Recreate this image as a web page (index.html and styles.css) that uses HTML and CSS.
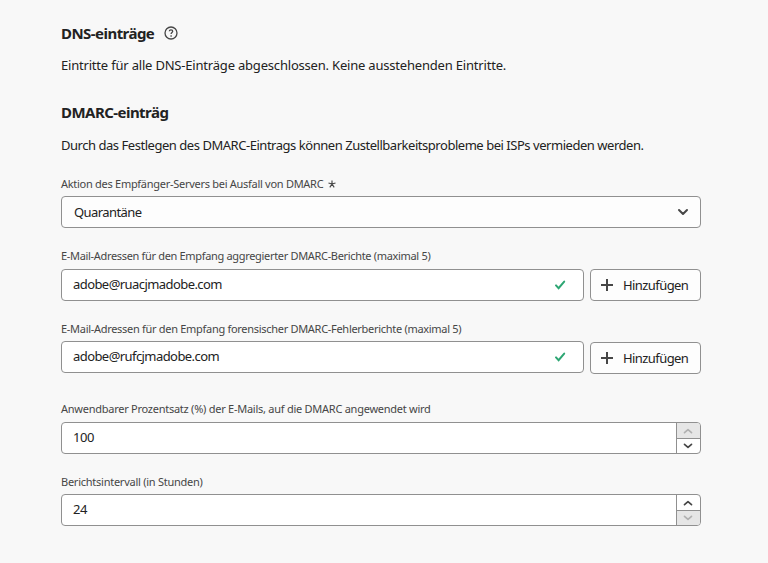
FILE: index.html
```html
<!DOCTYPE html>
<html lang="de">
<head>
<meta charset="utf-8">
<title>DNS-einträge</title>
<link rel="stylesheet" href="styles.css">
</head>
<body>
<main class="form">
  <h2 class="heading heading-dns"><span>DNS-einträge</span>
    <svg class="help" viewBox="0 0 14 14"><circle cx="7" cy="7" r="6"/><path d="M5.3 5.3C5.4 4.3 6 3.9 7 3.9c1 0 1.7.5 1.7 1.4 0 1.2-1.6 1.3-1.6 2.8M7.1 9.3v1.5"/></svg>
  </h2>
  <p class="text text-status">Eintritte für alle DNS-Einträge abgeschlossen. Keine ausstehenden Eintritte.</p>
  <h2 class="heading heading-dmarc">DMARC-einträg</h2>
  <p class="text text-info">Durch das Festlegen des DMARC-Eintrags können Zustellbarkeitsprobleme bei ISPs vermieden werden.</p>

  <section class="field field-action">
    <div class="label label-action"><span>Aktion des Empfänger-Servers bei Ausfall von DMARC</span>
      <svg class="star" viewBox="0 0 8 8"><path d="M4 .4V4M4 4 .5 3M4 4l3.5-1M4 4 1.8 7.4M4 4l2.2 3.4"/></svg>
    </div>
    <div class="box select"><span>Quarantäne</span>
      <svg class="chevron" viewBox="0 0 12 8"><path d="m2 2 4 4 4-4"/></svg>
    </div>
  </section>

  <section class="field field-rua">
    <div class="label label-rua">E-Mail-Adressen für den Empfang aggregierter DMARC-Berichte (maximal 5)</div>
    <div class="row">
      <div class="box email"><span>adobe@ruacjmadobe.com</span>
        <svg class="check" viewBox="0 0 12 10"><path d="m2 5.4 2.6 2.8 5.6-6.6"/></svg>
      </div>
      <div class="box button"><svg class="plus" viewBox="0 0 12 12"><path d="M6 0v12M0 6h12"/></svg><span>Hinzufügen</span></div>
    </div>
  </section>

  <section class="field field-ruf">
    <div class="label label-ruf">E-Mail-Adressen für den Empfang forensischer DMARC-Fehlerberichte (maximal 5)</div>
    <div class="row">
      <div class="box email"><span>adobe@rufcjmadobe.com</span>
        <svg class="check" viewBox="0 0 12 10"><path d="m2 5.4 2.6 2.8 5.6-6.6"/></svg>
      </div>
      <div class="box button button-low"><svg class="plus" viewBox="0 0 12 12"><path d="M6 0v12M0 6h12"/></svg><span>Hinzufügen</span></div>
    </div>
  </section>

  <section class="field field-percent">
    <div class="label label-percent">Anwendbarer Prozentsatz (%) der E-Mails, auf die DMARC angewendet wird</div>
    <div class="box number"><span>100</span>
      <div class="stepper">
        <div class="step disabled"><svg viewBox="0 0 10 6"><path d="m1.5 4.7 3.5-3 3.5 3"/></svg></div>
        <div class="step"><svg viewBox="0 0 10 6"><path d="m1.5 1.3 3.5 3 3.5-3"/></svg></div>
      </div>
    </div>
  </section>

  <section class="field field-interval">
    <div class="label label-interval">Berichtsintervall (in Stunden)</div>
    <div class="box number"><span>24</span>
      <div class="stepper">
        <div class="step"><svg viewBox="0 0 10 6"><path d="m1.5 4.7 3.5-3 3.5 3"/></svg></div>
        <div class="step disabled"><svg viewBox="0 0 10 6"><path d="m1.5 1.3 3.5 3 3.5-3"/></svg></div>
      </div>
    </div>
  </section>
</main>
</body>
</html>
```
FILE: styles.css
```css
* { box-sizing: border-box; }
body { margin: 0; background: #f8f8f8; color: #222; font: 13px/20px "Noto Sans", "Open Sans", sans-serif; }
.form { width: 640px; margin-left: 61px; padding-top: 23px; white-space: nowrap; }
svg { display: block; flex: none; fill: none; stroke: #464646; }
.heading { display: flex; align-items: center; margin: 0; height: 20px; font-size: 15px; line-height: 20px; font-weight: 700; letter-spacing: -0.54px; }
.heading-dmarc { margin-top: 27px; }
.help { width: 14px; height: 14px; margin-left: 10px; stroke-width: 1.3; }
.text { margin: 0; height: 20px; }
.text-status { margin-top: 12px; letter-spacing: -0.195px; }
.text-info { margin-top: 13px; letter-spacing: -0.465px; }
.label { display: flex; align-items: center; height: 16px; color: #464646; font-size: 11px; line-height: 16px; }
.label-action { letter-spacing: -0.28px; }
.label-rua { letter-spacing: -0.325px; }
.label-ruf { letter-spacing: -0.295px; }
.label-percent { letter-spacing: -0.255px; }
.label-interval { letter-spacing: -0.25px; }
.star { width: 8px; height: 8px; margin-left: 5px; stroke-width: 1.15; }
.field-action { margin-top: 21px; }
.field-rua { margin-top: 20px; }
.field-ruf { margin-top: 20px; }
.field-percent { margin-top: 28px; }
.field-interval { margin-top: 20px; }
.box { display: flex; align-items: center; height: 32px; border: 1px solid #909090; border-radius: 4px; background: #fff; letter-spacing: -0.57px; }
.select { margin-top: 4px; padding: 0 11px 0 12px; justify-content: space-between; background: #fdfdfd; }
.chevron { width: 12px; height: 8px; stroke-width: 2; stroke-linecap: round; stroke-linejoin: round; }
.row { display: flex; align-items: flex-start; gap: 6px; height: 32px; margin-top: 5px; }
.field-ruf .row { margin-top: 4px; }
.email { flex: 1; padding: 0 17px 1px 11px; justify-content: space-between; }
.email > span { padding-bottom: 1px; }
.check { width: 12px; height: 10px; stroke: #2da673; stroke-width: 2; stroke-linecap: round; }
.button { width: 111px; padding-left: 10px; background: #fdfdfd; }
.button-low { margin-top: 1px; }
.plus { width: 12px; height: 12px; margin-right: 10px; stroke-width: 2; }
.number { margin-top: 5px; padding: 0 0 0 11px; justify-content: space-between; overflow: hidden; letter-spacing: -0.4px; }
.number > span { padding-bottom: 2px; }
.field-interval .number { margin-top: 4px; }
.stepper { display: flex; flex-direction: column; width: 24px; height: 30px; border-left: 1px solid #909090; }
.step { display: flex; flex: none; height: 15px; align-items: center; justify-content: center; padding-right: 1px; }
.step + .step { border-top: 1px solid #909090; padding-bottom: 1px; }
.step svg { width: 10px; height: 6px; stroke-width: 1.7; stroke-linecap: round; stroke-linejoin: round; }
.disabled { background: #e6e6e6; }
.disabled svg { stroke: #b1b1b1; }
```
